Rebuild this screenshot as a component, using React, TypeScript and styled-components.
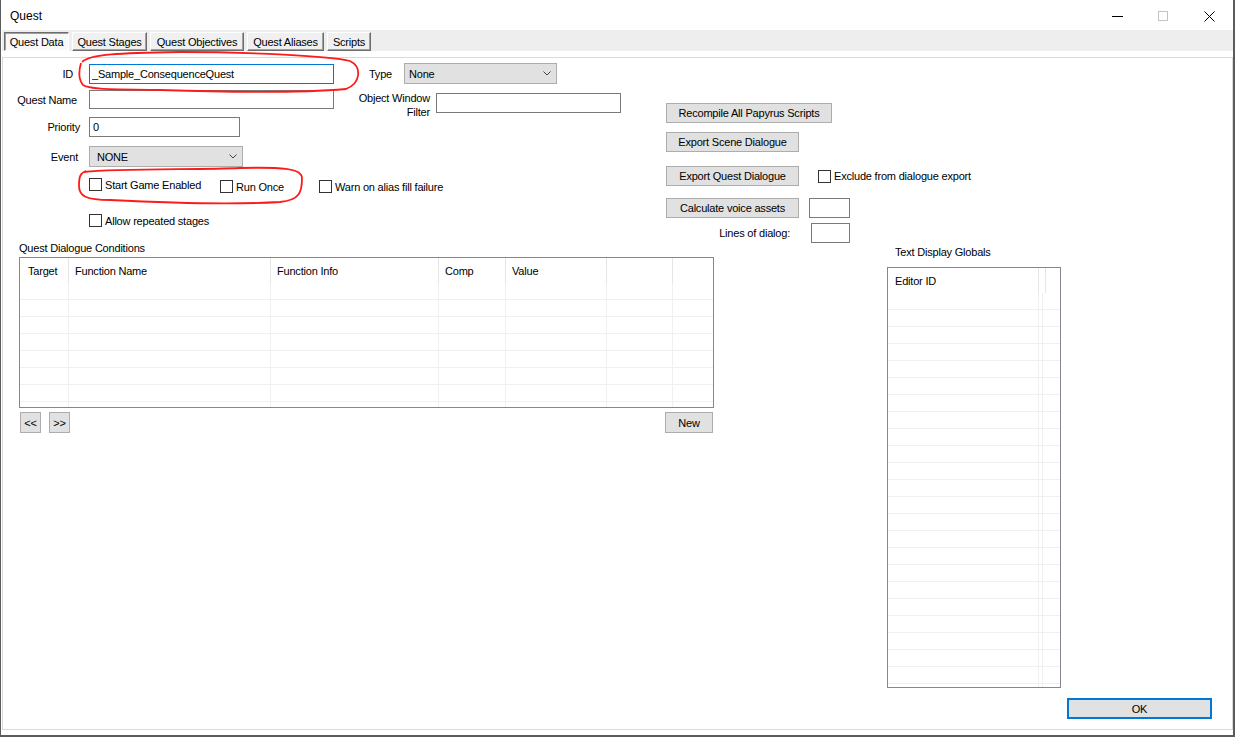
import styled, { createGlobalStyle } from "styled-components";

const GlobalStyle = createGlobalStyle`
  html, body {
    margin: 0;
    padding: 0;
    background: #fff;
  }
  body {
    font-family: "Liberation Sans", Arial, sans-serif;
    font-size: 11px;
    letter-spacing: -0.2px;
    color: #000;
  }
  * {
    box-sizing: border-box;
  }
`

const Window = styled.div`
  position: relative;
  width: 1235px;
  height: 737px;
  display: flex;
  flex-direction: column;
  background: #fff;
  border-left: 1px solid #5c5c5c;
  border-right: 2px solid #5c5c5c;
  border-bottom: 2px solid #5c5c5c;
`

const TitleBar = styled.div`
  height: 30px;
  display: flex;
  align-items: center;
  padding-top: 2px;
  flex-shrink: 0;
`

const Title = styled.div`
  padding-left: 9px;
  font-size: 12px;
  letter-spacing: 0;
`

const Controls = styled.div`
  margin-left: auto;
  display: flex;
  height: 28px;
  padding-right: 1px;
`

const CtrlBtn = styled.div`
  width: 46px;
  display: flex;
  align-items: center;
  justify-content: center;
`

const TabStrip = styled.div`
  height: 21px;
  margin-left: 1px;
  padding: 2px 0 0 2px;
  background: #eeeeee;
  display: flex;
  gap: 3px;
  flex-shrink: 0;
`

const Tab = styled.div<{ $w: number; $active?: boolean }>`
  width: ${p => p.$w}px;
  height: 19px;
  display: flex;
  align-items: center;
  justify-content: center;
  background: ${p => (p.$active ? "#f8f8f8" : "#f0f0f0")};
  border: 1px solid;
  border-color: ${p => (p.$active ? "#6d6d6d #ffffff #ffffff #6d6d6d" : "#ffffff #6d6d6d #6d6d6d #ffffff")};
  box-shadow: ${p => (p.$active ? "inset 1px 1px 0 #a0a0a0" : "inset -1px -1px 0 #a0a0a0")};
  white-space: nowrap;
`

const Panel = styled.div`
  flex: 1;
  margin: 6px 0 5px 1px;
  border: 1px solid #dadada;
  padding: 5px 0 0 14px;
  display: flex;
  flex-direction: column;
`

const TopSection = styled.div`
  display: flex;
  height: 179px;
  flex-shrink: 0;
`

const Form = styled.div`
  width: 604px;
  display: flex;
  flex-direction: column;
`

const FormRow = styled.div<{ $h: number; $mt?: number; $align?: string }>`
  display: flex;
  align-items: ${p => p.$align || "center"};
  height: ${p => p.$h}px;
  margin-top: ${p => p.$mt || 0}px;
  flex-shrink: 0;
`

const FieldLabel = styled.div<{ $w: number; $pr: number; $mt?: number; $top?: boolean }>`
  width: ${p => p.$w}px;
  padding-right: ${p => p.$pr}px;
  margin-top: ${p => p.$mt || 0}px;
  align-self: ${p => (p.$top ? "flex-start" : "auto")};
  line-height: 14px;
  text-align: right;
  flex-shrink: 0;
  white-space: nowrap;
`

const TextBox = styled.input<{ $w: number; $h: number; $focus?: boolean; $mt?: number; $pl?: number }>`
  width: ${p => p.$w}px;
  height: ${p => p.$h}px;
  margin: ${p => p.$mt || 0}px 0 0 0;
  align-self: ${p => (p.$mt ? "flex-start" : "auto")};
  padding: 0 0 0 ${p => (p.$pl === undefined ? 2 : p.$pl)}px;
  border: 1px solid ${p => (p.$focus ? "#0078d7" : "#7a7a7a")};
  background: #fff;
  font-family: "Liberation Sans", Arial, sans-serif;
  font-size: 11px;
  letter-spacing: -0.2px;
  color: #000;
  outline: none;
  flex-shrink: 0;
`

const Select = styled.div<{ $w: number; $pl: number }>`
  width: ${p => p.$w}px;
  height: 21px;
  padding: 0 5px 0 ${p => p.$pl}px;
  background: #e1e1e1;
  border: 1px solid #adadad;
  display: flex;
  align-items: center;
  justify-content: space-between;
  flex-shrink: 0;
`

const CheckItem = styled.div<{ $w?: number; $mt?: number; $ml?: number }>`
  display: flex;
  align-items: center;
  gap: 3px;
  width: ${p => (p.$w ? `${p.$w}px` : "auto")};
  margin-top: ${p => p.$mt || 0}px;
  margin-left: ${p => p.$ml || 0}px;
  white-space: nowrap;
  flex-shrink: 0;
`

const Box = styled.span`
  width: 13px;
  height: 13px;
  border: 1px solid #333;
  background: #fff;
  flex-shrink: 0;
`

const ActionCol = styled.div`
  margin-left: 45px;
  padding-top: 40px;
  display: flex;
  flex-direction: column;
`

const ActionRow = styled.div<{ $mt: number; $h?: number }>`
  display: flex;
  align-items: center;
  margin-top: ${p => p.$mt}px;
  height: ${p => p.$h || 20}px;
`

const Button = styled.button<{ $w: number; $h?: number; $default?: boolean }>`
  width: ${p => p.$w}px;
  height: ${p => p.$h || 20}px;
  padding: 0;
  background: #e1e1e1;
  border: ${p => (p.$default ? "2px solid #0078d7" : "1px solid #adadad")};
  font-family: "Liberation Sans", Arial, sans-serif;
  font-size: 11px;
  letter-spacing: -0.2px;
  color: #000;
  flex-shrink: 0;
`

const SmallBox = styled.div<{ $w: number; $ml: number }>`
  width: ${p => p.$w}px;
  height: 20px;
  margin-left: ${p => p.$ml}px;
  border: 1px solid #7a7a7a;
  background: #fff;
`

const BottomSection = styled.div`
  display: flex;
  align-items: flex-start;
  flex-shrink: 0;
`

const ConditionsBlock = styled.div`
  margin-left: 2px;
  width: 695px;
  display: flex;
  flex-direction: column;
`

const GlobalsBlock = styled.div`
  margin-left: 173px;
  display: flex;
  flex-direction: column;
`

const GroupLabel = styled.div<{ $mt?: number; $pl?: number }>`
  height: 13px;
  line-height: 13px;
  margin-top: ${p => p.$mt || 0}px;
  padding-left: ${p => p.$pl || 0}px;
  white-space: nowrap;
`

const ListView = styled.div<{ $w: number; $h: number; $mt: number }>`
  width: ${p => p.$w}px;
  height: ${p => p.$h}px;
  margin-top: ${p => p.$mt}px;
  border: 1px solid #828790;
  background: #fff;
  overflow: hidden;
`

const ListHeader = styled.div<{ $cols: string }>`
  display: grid;
  grid-template-columns: ${p => p.$cols};
  height: 25px;
`

const HeaderCell = styled.div<{ $sep?: boolean; $pl?: number }>`
  display: flex;
  align-items: center;
  padding-left: ${p => p.$pl || 6}px;
  border-right: 1px solid ${p => (p.$sep ? "#e5e5e5" : "transparent")};
  white-space: nowrap;
  overflow: hidden;
`

const ListRow = styled.div<{ $cols: string }>`
  display: grid;
  grid-template-columns: ${p => p.$cols};
  height: 17px;
  border-bottom: 1px solid #f0f0f0;
`

const ListCell = styled.div<{ $sep?: boolean }>`
  border-right: 1px solid ${p => (p.$sep ? "#f0f0f0" : "transparent")};
`

const NavRow = styled.div`
  display: flex;
  align-items: center;
  gap: 8px;
  margin-top: 4px;
  padding: 0 1px;
`

const Spacer = styled.div`
  flex: 1;
`

const Footer = styled.div`
  display: flex;
  justify-content: flex-end;
  margin-top: 10px;
  padding-right: 20px;
`

const Annotations = styled.svg`
  position: absolute;
  top: 0;
  left: -1px;
  pointer-events: none;
`

const Chevron = () => (
  <svg width="8" height="5" viewBox="0 0 8 5">
    <polyline points="0.5,0.5 4,4 7.5,0.5" fill="none" stroke="#444" strokeWidth="1" />
  </svg>
)

const CheckBox = ({ label, w, mt, ml }: { label: string; w?: number; mt?: number; ml?: number }) => (
  <CheckItem $w={w} $mt={mt} $ml={ml}>
    <Box />
    <span>{label}</span>
  </CheckItem>
)

const condCols = "49px 202px 168px 67px 101px 66px 1fr"
const condHeaders = [
  { t: "Target", pl: 8 },
  { t: "Function Name", pl: 6 },
  { t: "Function Info", pl: 6 },
  { t: "Comp", pl: 6 },
  { t: "Value", pl: 6 },
  { t: "", pl: 6 },
]

const globCols = "151px 4px 1fr"

function App() {
  const condRows = Array.from({ length: 8 })
  const globRows = Array.from({ length: 24 })

  return (
    <>
      <GlobalStyle />
      <Window>
        <TitleBar>
          <Title>Quest</Title>
          <Controls>
            <CtrlBtn>
              <svg width="11" height="10" viewBox="0 0 11 10">
                <line x1="0" y1="5.5" x2="11" y2="5.5" stroke="#000" strokeWidth="1" />
              </svg>
            </CtrlBtn>
            <CtrlBtn>
              <svg width="10" height="10" viewBox="0 0 10 10">
                <rect x="0.5" y="0.5" width="9" height="9" fill="none" stroke="#c4c4c4" strokeWidth="1" />
              </svg>
            </CtrlBtn>
            <CtrlBtn>
              <svg width="11" height="11" viewBox="0 0 11 11">
                <path d="M0.5 0.5 L10.5 10.5 M10.5 0.5 L0.5 10.5" stroke="#000" strokeWidth="1" />
              </svg>
            </CtrlBtn>
          </Controls>
        </TitleBar>

        <TabStrip>
          <Tab $w={65} $active>Quest Data</Tab>
          <Tab $w={75}>Quest Stages</Tab>
          <Tab $w={94}>Quest Objectives</Tab>
          <Tab $w={77}>Quest Aliases</Tab>
          <Tab $w={44}>Scripts</Tab>
        </TabStrip>

        <Panel>
          <TopSection>
            <Form>
              <FormRow $h={21}>
                <FieldLabel $w={72} $pr={16}>ID</FieldLabel>
                <TextBox $w={245} $h={20} $focus defaultValue="_Sample_ConsequenceQuest" />
                <FieldLabel $w={70} $pr={12}>Type</FieldLabel>
                <Select $w={153} $pl={4}>
                  <span>None</span>
                  <Chevron />
                </Select>
              </FormRow>

              <FormRow $h={19} $mt={6}>
                <FieldLabel $w={72} $pr={12}>Quest Name</FieldLabel>
                <TextBox $w={245} $h={19} defaultValue="" />
                <FieldLabel $w={102} $pr={6} $mt={1} $top>
                  Object Window
                  <br />
                  Filter
                </FieldLabel>
                <TextBox $w={185} $h={20} $mt={3} defaultValue="" />
              </FormRow>

              <FormRow $h={20} $mt={8}>
                <FieldLabel $w={72} $pr={9}>Priority</FieldLabel>
                <TextBox $w={151} $h={20} $pl={3} defaultValue="0" />
              </FormRow>

              <FormRow $h={21} $mt={9}>
                <FieldLabel $w={72} $pr={11}>Event</FieldLabel>
                <Select $w={154} $pl={7}>
                  <span>NONE</span>
                  <Chevron />
                </Select>
              </FormRow>

              <FormRow $h={15} $mt={11} $align="flex-start">
                <CheckBox label="Start Game Enabled" w={131} ml={72} />
                <CheckBox label="Run Once" w={99} mt={2} />
                <CheckBox label="Warn on alias fill failure" mt={2} />
              </FormRow>

              <FormRow $h={13} $mt={21}>
                <CheckBox label="Allow repeated stages" ml={72} />
              </FormRow>
            </Form>

            <ActionCol>
              <ActionRow $mt={0}>
                <Button $w={166}>Recompile All Papyrus Scripts</Button>
              </ActionRow>
              <ActionRow $mt={9}>
                <Button $w={133}>Export Scene Dialogue</Button>
              </ActionRow>
              <ActionRow $mt={14}>
                <Button $w={133}>Export Quest Dialogue</Button>
                <CheckBox label="Exclude from dialogue export" ml={19} />
              </ActionRow>
              <ActionRow $mt={12}>
                <Button $w={133}>Calculate voice assets</Button>
                <SmallBox $w={41} $ml={10} />
              </ActionRow>
              <ActionRow $mt={5}>
                <FieldLabel $w={145} $pr={21}>Lines of dialog:</FieldLabel>
                <SmallBox $w={39} $ml={0} />
              </ActionRow>
            </ActionCol>
          </TopSection>

          <BottomSection>
            <ConditionsBlock>
              <GroupLabel>Quest Dialogue Conditions</GroupLabel>
              <ListView $w={695} $h={151} $mt={2}>
                <ListHeader $cols={condCols}>
                  {condHeaders.map((h, i) => (
                    <HeaderCell key={i} $sep $pl={h.pl}>{h.t}</HeaderCell>
                  ))}
                  <HeaderCell />
                </ListHeader>
                {condRows.map((_, r) => (
                  <ListRow key={r} $cols={condCols}>
                    {condHeaders.map((_, c) => (
                      <ListCell key={c} $sep />
                    ))}
                    <ListCell />
                  </ListRow>
                ))}
              </ListView>
              <NavRow>
                <Button $w={21} $h={21}>&lt;&lt;</Button>
                <Button $w={21} $h={21}>&gt;&gt;</Button>
                <Spacer />
                <Button $w={48} $h={21}>New</Button>
              </NavRow>
            </ConditionsBlock>

            <GlobalsBlock>
              <GroupLabel $mt={4} $pl={8}>Text Display Globals</GroupLabel>
              <ListView $w={174} $h={421} $mt={8}>
                <ListHeader $cols={globCols}>
                  <HeaderCell $sep $pl={7}>Editor ID</HeaderCell>
                  <HeaderCell $sep $pl={0} />
                  <HeaderCell />
                </ListHeader>
                {globRows.map((_, r) => (
                  <ListRow key={r} $cols={globCols}>
                    <ListCell $sep />
                    <ListCell $sep />
                    <ListCell />
                  </ListRow>
                ))}
              </ListView>
            </GlobalsBlock>
          </BottomSection>

          <Footer>
            <Button $w={145} $h={21} $default>OK</Button>
          </Footer>
        </Panel>

        <Annotations width="1235" height="737" viewBox="0 0 1235 737">
          <path
            d="M82 62 C90 54 120 53 180 52 C250 52 330 56 350 61 C362 67 361 83 346 89 C300 93 220 92 160 90 C120 89 90 90 83 85 C78 79 79 70 81 63"
            fill="none"
            stroke="#ff1a1a"
            strokeWidth="1.8"
          />
          <path
            d="M84 172 C120 168 200 170 240 168 C280 167 302 168 302 178 C302 192 300 200 280 202 C230 205 150 202 110 200 C86 200 79 196 79 186 C79 177 80 173 86 171"
            fill="none"
            stroke="#ff1a1a"
            strokeWidth="1.8"
          />
        </Annotations>
      </Window>
    </>
  )
}

export default App;
